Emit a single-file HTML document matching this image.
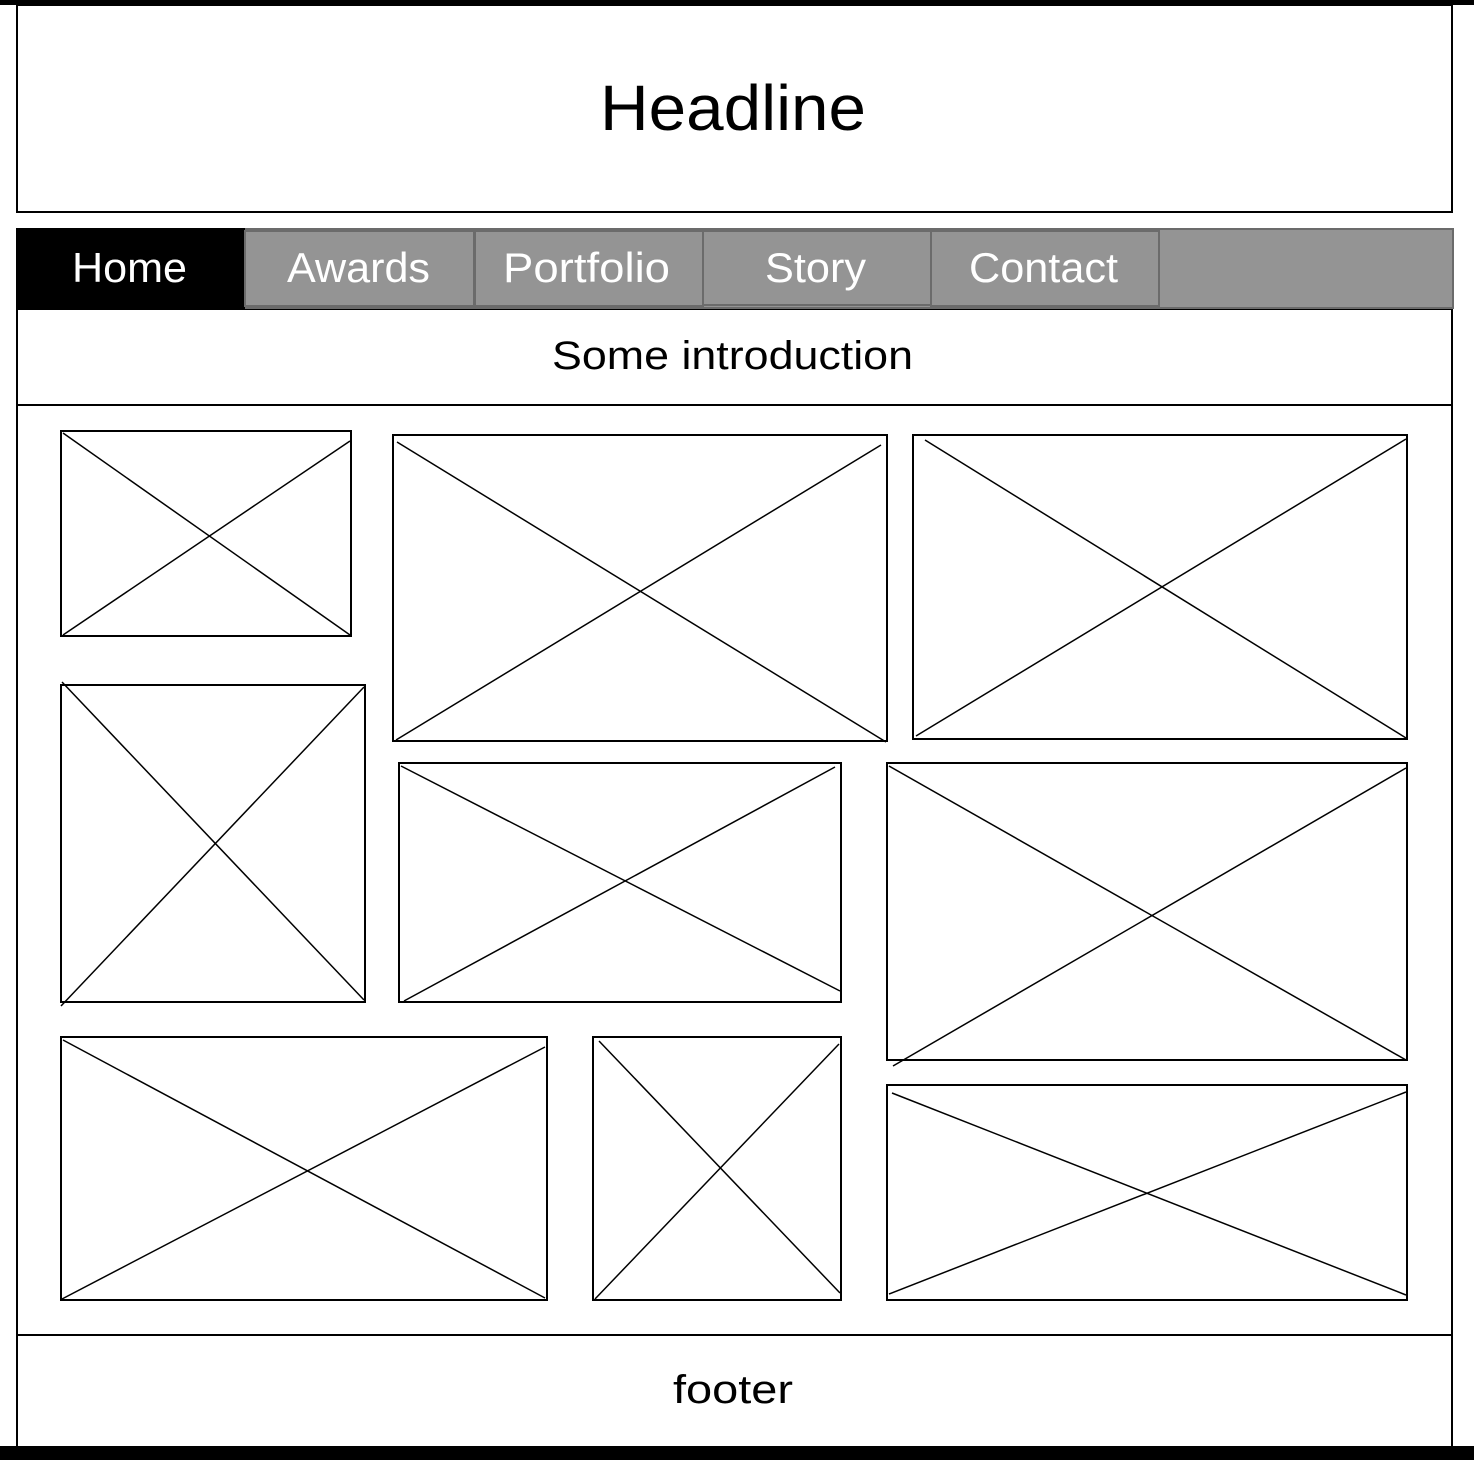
<!DOCTYPE html>
<html><head><meta charset="utf-8"><style>html,body{margin:0;padding:0;background:#fff}svg{display:block}</style></head>
<body>
<svg width="1474" height="1460" viewBox="0 0 1474 1460" xmlns="http://www.w3.org/2000/svg" font-family="Liberation Sans, DejaVu Sans, sans-serif">
<rect x="0" y="0" width="1474" height="1460" fill="#fff"/>
<rect x="0" y="0" width="1474" height="5" fill="#000"/>
<rect x="0" y="1446" width="1474" height="14" fill="#000"/>
<rect x="17" y="5" width="1435" height="207" fill="none" stroke="#000" stroke-width="2"/>
<text x="600" y="130" font-size="64" textLength="266" lengthAdjust="spacingAndGlyphs">Headline</text>
<line x1="17" y1="308" x2="17" y2="1446" stroke="#000" stroke-width="2"/>
<line x1="1452" y1="308" x2="1452" y2="1446" stroke="#000" stroke-width="2"/>
<line x1="17" y1="405" x2="1452" y2="405" stroke="#000" stroke-width="2"/>
<line x1="17" y1="1335" x2="1452" y2="1335" stroke="#000" stroke-width="2"/>
<line x1="17" y1="309" x2="1452" y2="309" stroke="#000" stroke-width="2"/>
<rect x="17" y="229" width="1436" height="79" fill="#949494" stroke="#6b6b6b" stroke-width="2"/>
<rect x="16" y="228" width="229" height="81" fill="#000"/>
<g fill="#949494" stroke="#6b6b6b" stroke-width="2">
<rect x="245" y="231" width="229" height="75"/>
<rect x="475" y="231" width="228" height="75"/>
<rect x="703" y="231" width="228" height="74"/>
<rect x="931" y="231" width="228" height="75"/>
</g>
<g fill="#fff" font-size="42">
<text x="72" y="282" textLength="115" lengthAdjust="spacingAndGlyphs">Home</text>
<text x="287" y="282" textLength="143" lengthAdjust="spacingAndGlyphs">Awards</text>
<text x="503" y="282" textLength="167" lengthAdjust="spacingAndGlyphs">Portfolio</text>
<text x="765" y="282" textLength="101" lengthAdjust="spacingAndGlyphs">Story</text>
<text x="969" y="282" textLength="149" lengthAdjust="spacingAndGlyphs">Contact</text>
</g>
<text x="552" y="369" font-size="40" textLength="361" lengthAdjust="spacingAndGlyphs">Some introduction</text>
<text x="673" y="1403" font-size="40" textLength="120" lengthAdjust="spacingAndGlyphs">footer</text>
<g fill="none" stroke="#000" stroke-width="2">
<rect x="61" y="431" width="290" height="205"/>
<rect x="393" y="435" width="494" height="306"/>
<rect x="913" y="435" width="494" height="304"/>
<rect x="61" y="685" width="304" height="317"/>
<rect x="399" y="763" width="442" height="239"/>
<rect x="887" y="763" width="520" height="297"/>
<rect x="61" y="1037" width="486" height="263"/>
<rect x="593" y="1037" width="248" height="263"/>
<rect x="887" y="1085" width="520" height="215"/>
</g>
<g stroke="#000" stroke-width="1.5">
<line x1="63" y1="433" x2="350" y2="635"/><line x1="350" y1="441" x2="63" y2="635"/>
<line x1="397" y1="442" x2="886" y2="742"/><line x1="881" y1="445" x2="396" y2="740"/>
<line x1="925" y1="440" x2="1406" y2="738"/><line x1="1406" y1="439" x2="916" y2="736"/>
<line x1="62" y1="682" x2="364" y2="1000"/><line x1="364" y1="687" x2="61" y2="1006"/>
<line x1="401" y1="766" x2="840" y2="991"/><line x1="835" y1="767" x2="404" y2="1001"/>
<line x1="889" y1="766" x2="1406" y2="1060"/><line x1="1406" y1="768" x2="893" y2="1066"/>
<line x1="63" y1="1040" x2="545" y2="1298"/><line x1="545" y1="1047" x2="62" y2="1299"/>
<line x1="599" y1="1041" x2="840" y2="1293"/><line x1="839" y1="1044" x2="595" y2="1299"/>
<line x1="892" y1="1093" x2="1406" y2="1295"/><line x1="1406" y1="1092" x2="889" y2="1294"/>
</g>
</svg>
</body></html>
